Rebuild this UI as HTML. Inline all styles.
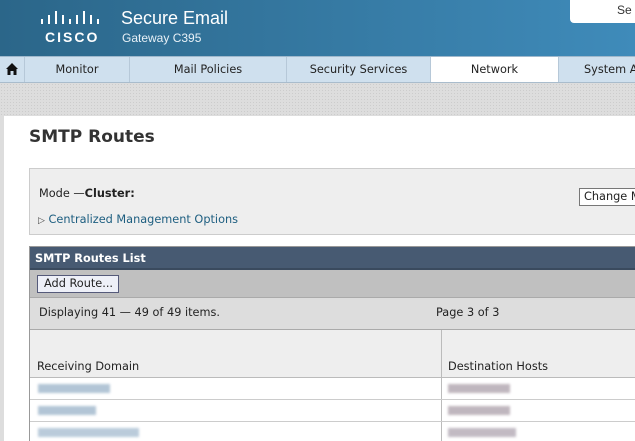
<!DOCTYPE html><html><head><style>
*{margin:0;padding:0;box-sizing:border-box}
html,body{width:635px;height:441px;overflow:hidden}
body{font-family:"DejaVu Sans","Liberation Sans",sans-serif;font-size:11px;color:#222;background:#fff;position:relative;white-space:nowrap}
#w{position:absolute;left:0;top:0;width:635px;height:441px;overflow:hidden}
.a{position:absolute}
.hdr{left:0;top:0;width:635px;height:56px;background:linear-gradient(90deg,#2b6689,#3f8bba)}
.nav{left:0;top:56px;width:635px;height:27px;background:#cfe0ee;border-top:1px solid #9fb8cc;border-bottom:1px solid #a9bccc;overflow:hidden}
.tab{position:absolute;top:0;height:25px;line-height:25px;text-align:center;font-size:11.3px;color:#222;border-right:1px solid #b6c8d8}
.band{left:0;top:83px;width:635px;height:33px;background:#ddd;background-image:radial-gradient(#ccc 0.6px,transparent 0.7px);background-size:3px 3px}
.blur{position:absolute;height:9px;filter:blur(1.3px);opacity:.8}
.t{font-size:11.3px}
</style></head><body><div id="w">
<div class="a hdr"></div>
<svg class="a" style="left:40px;top:11px" width="62" height="18"><g fill="#fff">
<rect x="1" y="8" width="2" height="5"/><rect x="8" y="4" width="2" height="9"/><rect x="15" y="0" width="2" height="13"/><rect x="22" y="4" width="2" height="9"/><rect x="29" y="8" width="2" height="5"/><rect x="36" y="4" width="2" height="9"/><rect x="43" y="0" width="2" height="13"/><rect x="50" y="4" width="2" height="9"/><rect x="57" y="8" width="2" height="5"/></g></svg>
<div class="a" style="left:45px;top:29px;color:#fff;font-weight:bold;font-size:14px;letter-spacing:2px;font-family:'Liberation Sans',sans-serif">CISCO</div>
<div class="a" style="left:121px;top:8px;color:#fff;font-size:18px;font-family:'Liberation Sans',sans-serif">Secure Email</div>
<div class="a" style="left:122px;top:31px;color:#e8f1f7;font-size:12px;font-family:'Liberation Sans',sans-serif">Gateway C395</div>
<div class="a" style="left:570px;top:-4px;width:80px;height:27px;background:#fff;border-radius:4px"></div>
<div class="a" style="left:617px;top:3px;font-size:12px;color:#333;font-family:'Liberation Sans',sans-serif">Se</div>
<div class="a nav">
<div class="tab" style="left:0;width:25px"><svg width="12" height="12" style="margin-top:6px"><path d="M6 0L0 6H1.5V12H4.5V8H7.5V12H10.5V6H12Z" fill="#111"/></svg></div>
<div class="tab" style="left:25px;width:105px">Monitor</div>
<div class="tab" style="left:130px;width:157px">Mail Policies</div>
<div class="tab" style="left:287px;width:144px">Security Services</div>
<div class="tab" style="left:431px;width:128px;background:#fff;height:26px">Network</div>
<div class="tab" style="left:559px;width:120px;text-align:left;padding-left:25px;border:none">System Administration</div>
</div>
<div class="a band"></div>
<div class="a" style="left:0;top:116px;width:4px;height:325px;background:#ddd"></div>
<div class="a" style="left:29px;top:127px;font-size:17px;font-weight:bold;color:#333">SMTP Routes</div>
<div class="a" style="left:29px;top:168px;width:610px;height:67px;background:#eee;border:1px solid #ccc"></div>
<div class="a t" style="left:39px;top:187px">Mode —<b>Cluster:</b></div>
<div class="a t" style="left:579px;top:188px;width:70px;height:18px;background:#fff;border:1px solid #777;padding:1px 0 0 4px">Change Mode</div>
<div class="a t" style="left:38px;top:213px;color:#1d5e80"><span style="color:#444;font-size:9px">▷</span> Centralized Management Options</div>
<div class="a" style="left:29px;top:246px;width:610px;height:196px;border:1px solid #999;border-right:none"></div>
<div class="a" style="left:30px;top:247px;width:605px;height:23px;background:#475a72;border-bottom:2px solid #3a4a5e"></div>
<div class="a t" style="left:35px;top:252px;color:#fff;font-weight:bold">SMTP Routes List</div>
<div class="a" style="left:30px;top:270px;width:605px;height:28px;background:#c0c0c0;border-bottom:1px solid #aaa"></div>
<div class="a t" style="left:37px;top:275px;width:82px;height:18px;background:#eef0f8;border:1px solid #555a7a;padding:1px 0 0 6px">Add Route...</div>
<div class="a" style="left:30px;top:298px;width:605px;height:32px;background:#ddd;border-bottom:1px solid #aaa"></div>
<div class="a t" style="left:39px;top:306px">Displaying 41 — 49 of 49 items.</div>
<div class="a t" style="left:436px;top:306px">Page 3 of 3</div>
<div class="a" style="left:30px;top:330px;width:605px;height:48px;background:#eee;border-bottom:1px solid #bbb"></div>
<div class="a t" style="left:37px;top:360px">Receiving Domain</div>
<div class="a t" style="left:448px;top:360px">Destination Hosts</div>
<div class="a" style="left:441px;top:330px;width:1px;height:111px;background:#bbb"></div>
<div class="a" style="left:30px;top:399px;width:605px;height:1px;background:#ccc"></div>
<div class="a" style="left:30px;top:421px;width:605px;height:1px;background:#ccc"></div>
<div class="blur" style="left:38px;top:384px;width:72px;background:#9fb7cc"></div>
<div class="blur" style="left:38px;top:406px;width:58px;background:#9fb7cc"></div>
<div class="blur" style="left:38px;top:428px;width:101px;background:#a9bfd2"></div>
<div class="blur" style="left:448px;top:384px;width:62px;background:#b0a4ae"></div>
<div class="blur" style="left:448px;top:406px;width:62px;background:#b0a4ae"></div>
<div class="blur" style="left:448px;top:428px;width:68px;background:#b3aab5"></div>
</div></body></html>
